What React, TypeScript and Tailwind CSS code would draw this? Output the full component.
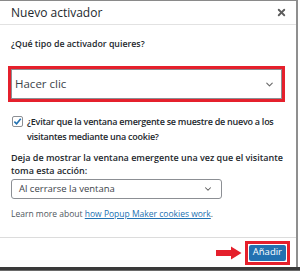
import { ChevronDown, X } from "lucide-react"

const font = { fontFamily: '"Open Sans", "Noto Sans", sans-serif' }

export default function App() {
  return (
    <div className="w-[300px] h-[271px] bg-white overflow-hidden flex flex-col" style={font}>
      <div className="flex h-[267px]">
        <div className="w-[298px] flex flex-col border-t border-[#8a8a8a] border-r-2 border-r-[#8f8f8f] bg-white">
          {/* header */}
          <div className="h-[24px] flex items-center justify-between pl-[11px] pr-[9px] border-b border-[#e2e2e2]">
            <span className="text-[12px] leading-none text-[#23282d]">Nuevo activador</span>
            <X size={11} strokeWidth={4} className="text-[#5c5c5c]" />
          </div>

          {/* body */}
          <div className="flex-1 flex flex-col pl-[11px] pr-[12px]">
            <p className="mt-[12px] text-[8.8px] font-semibold text-[#23282d] leading-[14px]">
              ¿Qué tipo de activador quieres?
            </p>

            <div className="mt-[15px] ml-[-3px] w-[277px] h-[36px] border-[3px] border-[#e5202c] flex">
              <div className="flex-1 border border-[#8c8f94] flex items-center justify-between pl-[3px] pr-[6px]">
                <span className="text-[11.5px] text-[#3c434a]">Hacer clic</span>
                <ChevronDown size={11} strokeWidth={2.5} className="text-[#6b6b6b]" />
              </div>
            </div>

            <label className="mt-[13px] flex items-start gap-[4px]">
              <span className="mt-[1px] ml-[1px] w-[11px] h-[11px] shrink-0 border border-[#8c8f94] rounded-[2px] flex items-center justify-center bg-white">
                <svg width="9" height="9" viewBox="0 0 10 10">
                  <path d="M1.5 5.2 L4 7.6 L8.6 2" fill="none" stroke="#2271b1" strokeWidth="1.8" />
                </svg>
              </span>
              <span className="text-[9px] font-semibold text-[#23282d] leading-[15px] mt-[-1px] tracking-[-0.25px]">
                ¿Evitar que la ventana emergente se muestre de nuevo a los visitantes mediante una cookie?
              </span>
            </label>

            <p className="mt-[7px] text-[9px] font-semibold text-[#23282d] leading-[13px]">
              Deja de mostrar la ventana emergente una vez que el visitante toma esta acción:
            </p>

            <div className="mt-[2px] w-[211px] h-[20px] border border-[#8c8f94] rounded-[3px] flex items-center justify-between pl-[7px] pr-[8px]">
              <span className="text-[9.5px] text-[#3c434a]">Al cerrarse la ventana</span>
              <ChevronDown size={10} strokeWidth={2.5} className="text-[#5c5c5c]" />
            </div>

            <p className="mt-[8px] text-[8.5px] text-[#50575e] leading-[14px]">
              Learn more about{" "}
              <span className="text-[#2271b1] underline">how Popup Maker cookies work</span>.
            </p>
          </div>

          {/* footer */}
          <div className="h-[30px] border-t border-[#dcdcdc] flex items-center justify-end pr-[6px] gap-[3px]">
            <svg width="26" height="14" viewBox="0 0 26 14">
              <path d="M0 4 H15 V0.5 L25.5 7 L15 13.5 V10 H0 Z" fill="#e5202c" />
            </svg>
            <div className="border-[3px] border-[#e5202c] p-[1px]">
              <div className="h-[16px] px-[4px] bg-[#2271b1] rounded-[2px] flex items-center text-[9.5px] text-white">
                Añadir
              </div>
            </div>
          </div>
        </div>
      </div>
      <div className="h-[3px] bg-[#3a3a3a]" />
      <div className="flex-1 bg-[#6a6a6a]" />
    </div>
  )
}
